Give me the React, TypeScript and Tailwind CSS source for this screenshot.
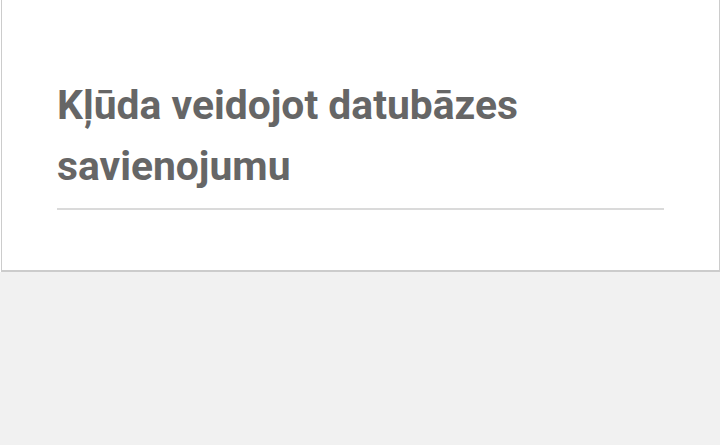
export default function App() {
  return (
    <div className="min-h-[445px] bg-[#f1f1f1] font-['Roboto',_'Liberation_Sans',_sans-serif]">
      <div className="bg-white pl-[1px]">
        <div className="h-[272px] border-x border-b-2 border-[#cccccc] bg-white px-[55px] pt-[75px]">
          <h1 className="border-b-2 border-[#dadada] pb-[11px] text-[40.8px] font-bold leading-[61px] text-[#666666]">
            Kļūda veidojot datubāzes savienojumu
          </h1>
        </div>
      </div>
    </div>
  );
}
